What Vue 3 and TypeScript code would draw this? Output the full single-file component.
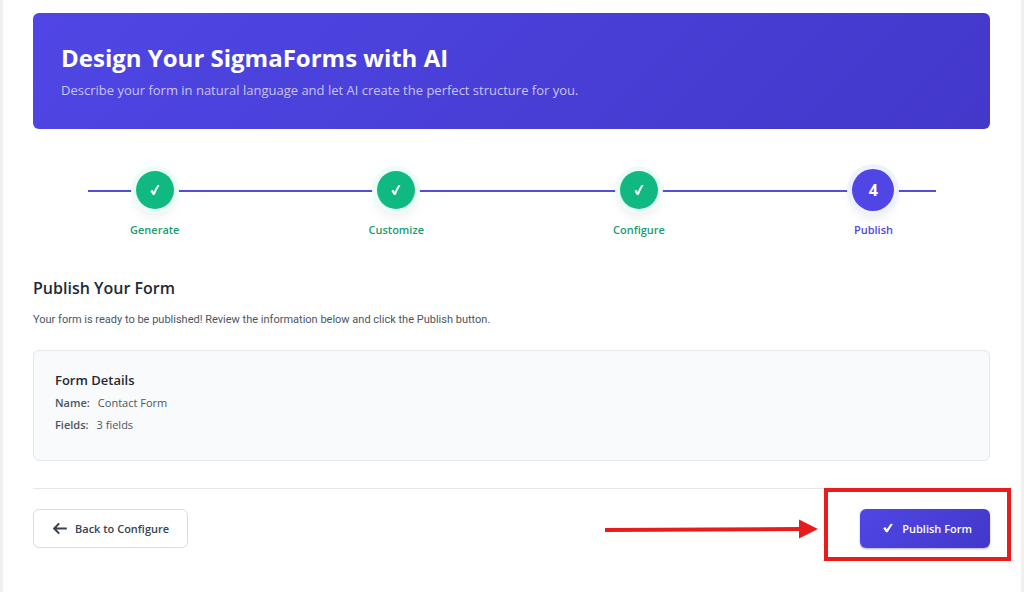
<script setup lang="ts">
interface Step {
  label: string
  done: boolean
}

const steps: Step[] = [
  { label: 'Generate', done: true },
  { label: 'Customize', done: true },
  { label: 'Configure', done: true },
  { label: 'Publish', done: false },
]

const details = [
  { term: 'Name:', value: 'Contact Form' },
  { term: 'Fields:', value: '3 fields' },
]
</script>

<template>
  <main class="page">
    <header class="hero">
      <h1>Design Your SigmaForms with AI</h1>
      <p>Describe your form in natural language and let AI create the perfect structure for you.</p>
    </header>

    <ol class="stepper">
      <li v-for="(step, i) in steps" :key="step.label" class="step" :class="{ done: step.done }">
        <span class="circle">
          <svg v-if="step.done" class="tick" viewBox="0 0 10 12" aria-hidden="true">
            <path d="M0.4 6.9 L2.4 5.8 L3.8 8 Q5.4 3.6 7.7 1 L9.5 1.2 Q6.7 5.4 4.8 10.8 L2.9 11 Z" />
          </svg>
          <template v-else>{{ i + 1 }}</template>
        </span>
        <span class="label">{{ step.label }}</span>
      </li>
    </ol>

    <section class="publish">
      <h2>Publish Your Form</h2>
      <p class="intro">Your form is ready to be published! Review the information below and click the Publish button.</p>
      <div class="card">
        <h3>Form Details</h3>
        <dl>
          <div v-for="item in details" :key="item.term" class="row">
            <dt>{{ item.term }}</dt>
            <dd>{{ item.value }}</dd>
          </div>
        </dl>
      </div>
    </section>

    <footer class="actions">
      <button type="button" class="btn back">
        <svg class="arrow-left" viewBox="0 0 14 12" aria-hidden="true">
          <path d="M13.8 5.5 H1.5 M6.2 0.4 L1.2 5.5 L6.2 10.6" />
        </svg>
        Back to Configure
      </button>
      <div class="target">
        <button type="button" class="btn primary">
          <svg class="check" viewBox="0 0 10 12" aria-hidden="true">
            <path d="M0.2 5.2 L2.2 4.1 L3.7 6.2 L7.8 0.8 L9.8 1.1 L4.6 9.3 L3 9.3 Z" />
          </svg>
          Publish Form
        </button>
        <svg class="pointer" viewBox="0 0 214 20" aria-hidden="true">
          <path d="M0 11 L196 10" />
          <polygon points="194,0.5 213,10 194,19.5" />
        </svg>
      </div>
    </footer>
  </main>
</template>

<style>
body {
  background: #f0f0f0;
}
</style>

<style scoped>
.page {
  box-sizing: border-box;
  min-height: 100vh;
  margin: 0 3px;
  padding: 13px 31px 32px 30px;
  background: #fff;
  color: #4b5563;
  font-family: "Segoe UI", "Open Sans", "Noto Sans", sans-serif;
  font-size: 11px;
}

h1, h2, h3, p, dl, dd, ol {
  margin: 0;
  padding: 0;
}

.hero {
  padding: 28px;
  border-radius: 6px;
  background: linear-gradient(135deg, #4f46e5, #4338ca);
  color: #fff;
}

.hero h1 {
  font-size: 24px;
  line-height: 34px;
  font-weight: 700;
}

.hero p {
  margin-top: 4px;
  color: #c7c5ee;
  font-size: 13px;
  line-height: 22px;
}

.stepper {
  position: relative;
  display: flex;
  justify-content: space-between;
  margin-top: 42px;
  padding: 0 97px;
  list-style: none;
}

.stepper::before {
  content: "";
  position: absolute;
  top: 19px;
  left: 55px;
  right: 54px;
  height: 2px;
  background: #564ddc;
}

.step {
  position: relative;
  display: flex;
  flex-direction: column;
  align-items: center;
  color: #4f46e5;
}

.circle {
  box-sizing: border-box;
  display: flex;
  align-items: center;
  justify-content: center;
  width: 42px;
  height: 42px;
  margin: -2px;
  border-radius: 50%;
  background: #4f46e5;
  box-shadow: 0 0 0 5px #eef2ff, 0 6px 12px rgba(0, 0, 0, 0.1);
  color: #fff;
  font-size: 16px;
  font-weight: 700;
}

.done .circle {
  width: 38px;
  height: 38px;
  margin: 0;
  background: #10b981;
  box-shadow: 0 0 0 5px #ecfdf5, 0 6px 12px rgba(0, 0, 0, 0.1);
}

.tick {
  width: 10px;
  height: 12px;
  fill: #fff;
}

.label {
  margin-top: 12px;
  line-height: 18px;
  font-weight: 600;
}

.done .label {
  color: #1a9c70;
}

.publish {
  margin-top: 36px;
}

h2 {
  color: #1f2937;
  font-size: 16px;
  line-height: 26px;
  font-weight: 600;
}

.intro {
  margin-top: 10px;
  font-family: "Segoe UI", Roboto, "Open Sans", sans-serif;
  line-height: 18px;
}

.card {
  margin-top: 21px;
  padding: 18px 21px 24px;
  border: 1px solid #e5e7eb;
  border-radius: 6px;
  background: #f9fafb;
}

h3 {
  margin-bottom: 1px;
  color: #1f2937;
  font-size: 13px;
  line-height: 22px;
  font-weight: 600;
}

.row {
  display: flex;
  gap: 8px;
  line-height: 22px;
}

dt {
  font-weight: 600;
}

.actions {
  display: flex;
  justify-content: space-between;
  align-items: flex-start;
  margin-top: 27px;
  padding-top: 20px;
  border-top: 1px solid #e5e7eb;
}

.btn {
  box-sizing: border-box;
  display: flex;
  align-items: center;
  height: 39px;
  border-radius: 6px;
  font: inherit;
  font-weight: 600;
  white-space: nowrap;
}

.back {
  gap: 8px;
  padding: 0 18px 0 19px;
  border: 1px solid #d9dce1;
  background: #fff;
  color: #374151;
}

.arrow-left {
  width: 14px;
  height: 12px;
  fill: none;
  stroke: #374151;
  stroke-width: 2;
}

.primary {
  gap: 9px;
  padding: 0 18px 0 23px;
  border: 0;
  background: linear-gradient(135deg, #4f46e5, #4338ca);
  box-shadow: 0 1px 2px rgba(67, 56, 202, 0.4);
  color: #fff;
}

.check {
  width: 10px;
  height: 12px;
  fill: #fff;
}

.target {
  position: relative;
}

/* Highlight frame drawn over the page around the publish button */
.target::after {
  content: "";
  position: absolute;
  inset: -21px -21px -13px -36px;
  border: 4px solid #e81c1c;
  pointer-events: none;
}

.pointer {
  position: absolute;
  top: 10px;
  right: calc(100% + 41px);
  width: 214px;
  height: 20px;
  fill: #e81c1c;
  pointer-events: none;
}

.pointer path {
  stroke: #e81c1c;
  stroke-width: 4;
}
</style>
